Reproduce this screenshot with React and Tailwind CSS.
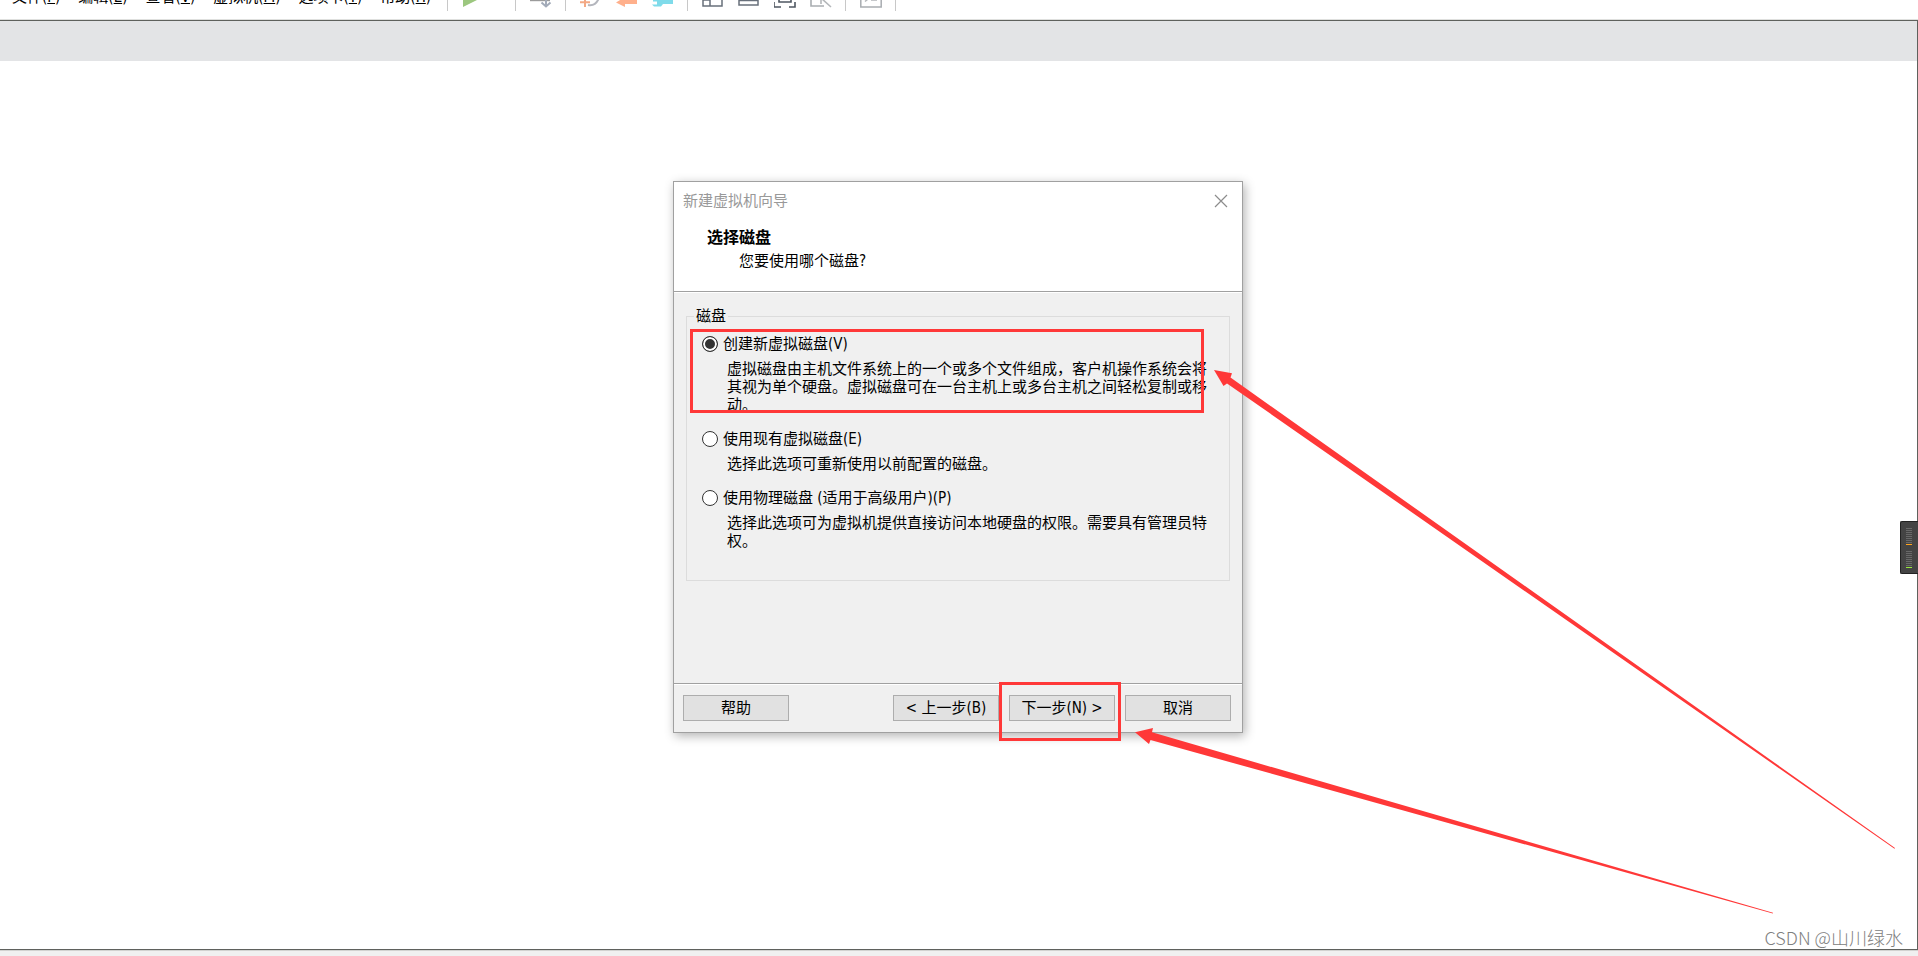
import React from "react";

const MENUS = [
  ["文件", "F"],
  ["编辑", "E"],
  ["查看", "V"],
  ["虚拟机", "M"],
  ["选项卡", "T"],
  ["帮助", "H"],
];

const OPTIONS = [
  {
    id: "create",
    label: "创建新虚拟磁盘(V)",
    text: "虚拟磁盘由主机文件系统上的一个或多个文件组成，客户机操作系统会将其视为单个硬盘。虚拟磁盘可在一台主机上或多台主机之间轻松复制或移动。",
    marked: true,
  },
  {
    id: "existing",
    label: "使用现有虚拟磁盘(E)",
    text: "选择此选项可重新使用以前配置的磁盘。",
  },
  {
    id: "physical",
    label: "使用物理磁盘 (适用于高级用户)(P)",
    text: "选择此选项可为虚拟机提供直接访问本地硬盘的权限。需要具有管理员特权。",
  },
];

function Tool({ label, children }) {
  return (
    <button type="button" aria-label={label} className="-mt-3 h-[22px] w-[22px]">
      <svg viewBox="0 -12 22 22" className="block h-[22px] w-[22px]" fill="none">
        {children}
      </svg>
    </button>
  );
}

function Group({ children }) {
  return (
    <div className="flex h-[11px] gap-[14px] border-l border-[#c8c8c8] pr-[13px] pl-[14px]">
      {children}
    </div>
  );
}

function Toolbar() {
  return (
    <div className="flex">
      <div className="flex h-[11px] border-l border-[#c8c8c8] pr-[31px] pl-[14px]">
        <Tool label="开机">
          <path d="M1 -12 L21 -3 L1 7 Z" fill="#9cc77f" />
        </Tool>
      </div>
      <Group>
        <Tool label="发送按键">
          <path d="M0 0.5 H20" stroke="#9b9b9b" strokeWidth="1.4" />
          <path d="M16 -4 V6 M11.5 2.5 L16 6.5 L20.5 2.5" stroke="#a3abb9" strokeWidth="2" />
        </Tool>
      </Group>
      <Group>
        <Tool label="拍摄快照">
          <path d="M0 2.3 H10 M5 -3 V7" stroke="#f3a985" strokeWidth="2" />
          <path d="M8 5 C13 6 17 3 19 -2" stroke="#b4b6bd" strokeWidth="2" />
        </Tool>
        <Tool label="恢复快照">
          <path d="M0 2.5 L9 -3 V-1 H21 V4 H9 V7 Z" fill="#ffb08c" />
        </Tool>
        <Tool label="管理快照">
          <path
            d="M0 4.5 H5 V1.5 H1 V-1 L5 -3 H9 L11 -1 H21 V4 H11 L9 6.5 H2 Z"
            fill="#7fdbea"
          />
        </Tool>
      </Group>
      <Group>
        <Tool label="显示库">
          <path d="M1 -11 H20 V6 H1 Z M8 -11 V6 M1 0 H8" stroke="#68707b" strokeWidth="1.5" />
        </Tool>
        <Tool label="缩略图栏">
          <path d="M1 -11 H20 V5 H1 Z M1 0.5 H20" stroke="#68707b" strokeWidth="1.5" />
        </Tool>
        <Tool label="全屏">
          <path d="M0 2 V7 H7 M15 7 H21 V2 M0 -7 V-11 H7 M15 -11 H21 V-7" stroke="#4f5761" strokeWidth="1.6" />
          <path d="M5 -7 H17 V2 H5 Z" stroke="#4f5761" strokeWidth="1.6" />
        </Tool>
        <Tool label="Unity 模式">
          <path d="M14 6 H1 V-11 H20 V-4" stroke="#a9adb1" strokeWidth="1.6" />
          <path d="M11 -2 L21 7 M11 -2 H17 M11 -2 V4" stroke="#b4b7ba" strokeWidth="1.6" />
        </Tool>
      </Group>
      <Group>
        <Tool label="控制台视图">
          <path d="M0.8 -11 H21.2 V7 H0.8 Z" stroke="#a9adb1" strokeWidth="1.5" />
          <path d="M4 -5 L8 -1 L5 1.5 M11 0 H17" stroke="#b4b7ba" strokeWidth="1.5" />
        </Tool>
      </Group>
      <div className="h-[11px] w-px bg-[#c8c8c8]" />
    </div>
  );
}

function MenuBar() {
  return (
    <header className="flex h-5 overflow-hidden border-b border-[#dfe0de] bg-white">
      <nav className="-mt-[13px] flex h-5 w-[447px] shrink-0 gap-[18px] pl-3 text-[15px] leading-5 whitespace-nowrap">
        {MENUS.map(([name, key]) => (
          <button key={key} type="button">
            {name}(<span className="underline">{key}</span>)
          </button>
        ))}
      </nav>
      <Toolbar />
    </header>
  );
}

function Option({ option }) {
  return (
    <div className="relative">
      <label className="flex h-5 items-center gap-[5px] leading-5">
        <input
          type="radio"
          name="disk"
          defaultChecked={option.id === "create"}
          aria-describedby={option.id}
          className="h-4 w-4 shrink-0 appearance-none rounded-full border border-[#333] bg-white checked:bg-[#333] checked:shadow-[inset_0_0_0_2px_white]"
        />
        <span>{option.label}</span>
      </label>
      <p id={option.id} className="mt-[6px] pl-[25px] leading-[18px]">
        {option.text}
      </p>
      {option.marked && (
        <div className="pointer-events-none absolute -top-[5px] right-[10px] bottom-px -left-3 z-10 border-3 border-[#ff3838]" />
      )}
    </div>
  );
}

function DialogButton({ children }) {
  return (
    <button
      type="button"
      className="h-[26px] w-[106px] border border-[#adadad] bg-[#e1e1e1] leading-5 whitespace-pre"
    >
      {children}
    </button>
  );
}

function Arrows() {
  return (
    <svg
      aria-hidden="true"
      viewBox="673 181 1240 740"
      className="pointer-events-none absolute -top-px -left-px z-20 h-[740px] w-[1240px] max-w-none"
      fill="#ff3838"
    >
      <path d="M1214 370 L1232 373.3 L1230.5 377.5 L1895 848 L1894.5 848.7 L1227 383.5 L1223.5 386 Z" />
      <path d="M1135 732.3 L1153 728 L1152 732.3 L1773 912.8 L1772.8 913.4 L1150.5 740 L1149 744 Z" />
    </svg>
  );
}

function Wizard() {
  return (
    <section
      role="dialog"
      aria-label="新建虚拟机向导"
      className="relative w-[570px] border border-[#a0a0a0] bg-[#f0f0f0] text-[15px] shadow-[2px_3px_10px_rgba(0,0,0,0.3)]"
    >
      <div className="border-b border-[#a0a0a0] bg-white pt-[9px] pb-5">
        <div className="flex h-5 items-center justify-between pr-[14px] pl-[9px] leading-5 text-[#999]">
          <span>新建虚拟机向导</span>
          <button type="button" aria-label="关闭">
            <svg viewBox="0 0 14 14" className="block h-[14px] w-[14px]" stroke="#8c8c8c" strokeWidth="1.2">
              <path d="M1 1 L13 13 M13 1 L1 13" />
            </svg>
          </button>
        </div>
        <h1 className="mt-[17px] pl-[33px] text-base leading-5 font-bold">选择磁盘</h1>
        <p className="mt-[3px] pl-[65px] leading-5">您要使用哪个磁盘?</p>
      </div>
      <div className="border-t border-white px-3 pt-[13px] pb-[102px]">
        <fieldset className="flex flex-col gap-[15px] border border-[#dcdcdc] px-[15px] pt-2 pb-[30px]">
          <legend className="-ml-2 px-[2px] leading-5">磁盘</legend>
          {OPTIONS.map((o) => (
            <Option key={o.id} option={o} />
          ))}
        </fieldset>
      </div>
      <div className="border-t border-[#a0a0a0]">
        <div className="flex gap-[10px] border-t border-white py-[10px] pr-[11px] pl-[9px]">
          <DialogButton>帮助</DialogButton>
          <div className="grow" />
          <DialogButton>{"< 上一步(B)"}</DialogButton>
          <div className="relative flex">
            <DialogButton>{"下一步(N) >"}</DialogButton>
            <div className="pointer-events-none absolute -top-[13px] -right-[6px] -bottom-5 -left-[10px] z-10 border-3 border-[#ff3838]" />
          </div>
          <DialogButton>取消</DialogButton>
        </div>
      </div>
      <Arrows />
    </section>
  );
}

function Meter({ lit }) {
  return (
    <div className="flex flex-col gap-px">
      {Array.from({ length: 8 }, (_, i) => (
        <div key={i} className="h-px w-[6px] bg-[#696969]" />
      ))}
      <div className={lit} />
    </div>
  );
}

export default function App() {
  return (
    <div className="flex min-h-screen flex-col overflow-hidden bg-white font-['DejaVu_Sans_Condensed','Noto_Sans_CJK_SC',sans-serif] text-black">
      <MenuBar />
      <main className="relative flex grow flex-col border-t border-r border-b border-[#5f615d]">
        <div className="h-10 bg-[#e3e4e6]" />
        <div className="flex grow justify-center pt-[120px] pr-px pb-[216px]">
          <Wizard />
        </div>
        <div className="absolute top-[500px] -right-px flex h-[53px] w-[18px] flex-col gap-[6px] rounded-l-xs border border-r-0 border-[#222] bg-[#444] pt-[6px] pl-[5px]">
          <Meter lit="h-px w-[6px] bg-[#ffa41c]" />
          <Meter lit="h-px w-[6px] bg-[#97e83c]" />
        </div>
        <div className="absolute right-[14px] bottom-0 font-['Noto_Sans_CJK_SC',sans-serif] text-lg leading-6 font-light text-[#808080]">
          CSDN @山川绿水
        </div>
      </main>
      <footer className="h-[6px] border-t border-[#d2d2d0] bg-[#f0f0f0]" />
    </div>
  );
}
